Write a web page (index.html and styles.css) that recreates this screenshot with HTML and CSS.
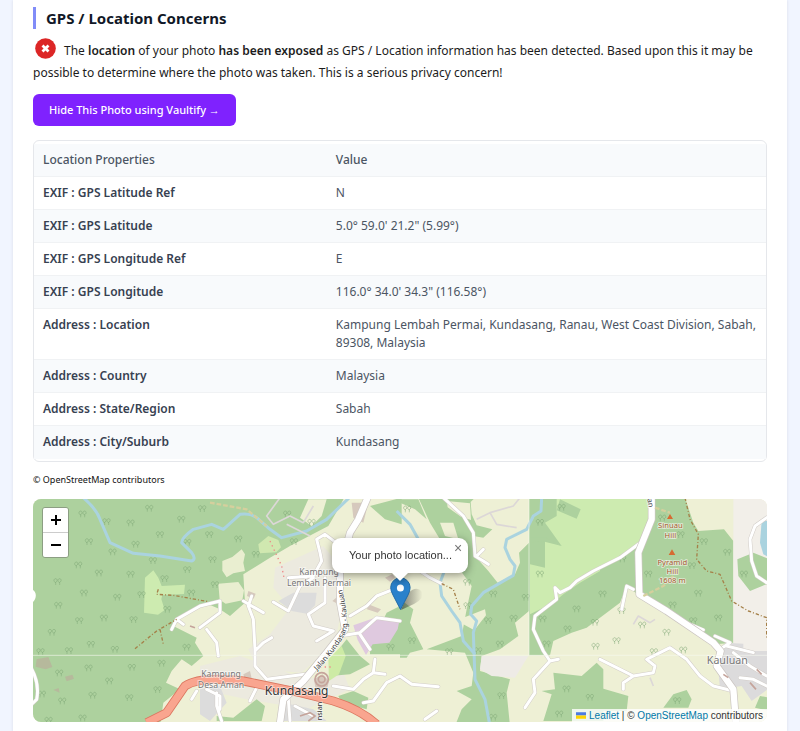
FILE: index.html
```html
<!DOCTYPE html>
<html lang="en">
<head>
<meta charset="utf-8">
<meta name="viewport" content="width=device-width, initial-scale=1">
<title>GPS / Location Concerns</title>
<link rel="stylesheet" href="styles.css">
</head>
<body>
<main class="card">
  <h2 class="title">GPS / Location Concerns</h2>
  <p class="notice"><svg class="alert" viewBox="0 0 21 21" aria-hidden="true"><circle cx="10.500" cy="10.500" r="10.300" fill="#dc2626"/><path d="M7.500 7.500l6 6m0-6l-6 6" stroke="#fff" stroke-width="2.800"/></svg>The <strong>location</strong> of your photo <strong>has been exposed</strong> as GPS / Location information has been detected. Based upon this it may be possible to determine where the photo was taken. This is a serious privacy concern!</p>
  <button class="cta" type="button">Hide This Photo using Vaultify →</button>

  <div class="table-box">
    <table>
      <thead><tr><th scope="col">Location Properties</th><th scope="col">Value</th></tr></thead>
      <tbody>
        <tr><th scope="row">EXIF : GPS Latitude Ref</th><td>N</td></tr>
        <tr><th scope="row">EXIF : GPS Latitude</th><td>5.0° 59.0' 21.2" (5.99°)</td></tr>
        <tr><th scope="row">EXIF : GPS Longitude Ref</th><td>E</td></tr>
        <tr><th scope="row">EXIF : GPS Longitude</th><td>116.0° 34.0' 34.3" (116.58°)</td></tr>
        <tr><th scope="row">Address : Location</th><td>Kampung Lembah Permai, Kundasang, Ranau, West Coast Division, Sabah, 89308, Malaysia</td></tr>
        <tr><th scope="row">Address : Country</th><td>Malaysia</td></tr>
        <tr><th scope="row">Address : State/Region</th><td>Sabah</td></tr>
        <tr><th scope="row">Address : City/Suburb</th><td>Kundasang</td></tr>
      </tbody>
    </table>
  </div>

  <p class="credit">© OpenStreetMap contributors</p>

  <section class="map" aria-label="Photo location map">
    <svg class="tiles" viewBox="99 39 2202 669" preserveAspectRatio="xMidYMid slice">
      <defs>
        <marker id="tree" markerUnits="userSpaceOnUse" markerWidth="30" markerHeight="30" refX="15" refY="15" viewBox="0 0 30 30">
          <path d="M9 24v-9m0 3l-3-4m3 2l3-3M21 24v-9m0 3l-3-4m3 2l3-3M5 14c-3-4 0-9 4-9s6 5 3 9M17 14c-3-4 0-9 4-9s6 5 3 9" fill="none" stroke="#7fa878" stroke-width="2" opacity=".75"/>
        </marker>
      </defs>
      <rect x="0" width="2400" height="740" fill="#eef0d5"/>

      <!-- west: forest and clearings -->
      <g transform="translate(60)">
        <path fill="#add19e" d="M0 0H990L960 60 925 120 810 180 750 215 670 265 675 350 630 390 600 370 555 350 470 395 460 420 530 455 525 470 550 510 515 540 485 520 455 555 438 590 480 610 430 650 420 720H0z"/>
        <path fill="#cdebb0" d="M375 275l25-22 15 22 10 25 70-4-3 28-65 3-3 12 10 33-20 14-42-6z"/>
        <path fill="#e9eed0" d="M607 225l30-12 28-23 10 15-5 25 5 25-35 7-20 12-13-20zM595 293l60-5 17 25-5 30-50 10-18-12z"/>
        <path fill="#bda99b" opacity=".6" d="M50 520l35-7 12 30-20 7-30-8zM135 572l22-6 5 12-22 8zM100 612l16-6 3 14z"/>
        <path fill="#fff" d="M35 310c18 8 15 30 0 42z"/>
      </g>

      <!-- centre: village and farmland -->
      <g transform="translate(600)">
        <path fill="#eceadf" d="M225 245l145-65 45 55 10 135-20 100-100 90-130-10-30-60 65-45 60-80-50-60zM0 540l120-30 200 70 110-20 20 50-130 60-180-30-140-30z"/>
        <path fill="#dcdcdc" d="M235 345l45-25 70 0-5 38-25 25-45-8zM0 610l60-10 20 50-50 55-30-20zM250 650l90 20 40 35H240z"/>
        <path fill="#d0e8b0" d="M175 175l30-25 30 12 8 22-14 15-50 3z"/>
        <path fill="#eef0d5" d="M325 40h55l-15 50-30 30-35-25z"/>
        <path fill="#add19e" d="M400 510l40-50 40 50 30 25-60 30-60 5zM50 690l50 5 70-55 25 20-10 45H50zM415 630l45-15 45 20-5 35-75-20zM510 480l50-100 40-20v145h-90zM510 60l95-25v80l-50-15z"/>
        <path fill="#dfc9df" d="M460 418l65-23 73 10-5 25-25 40-50 5-20 32-25-45z"/>
        <path fill="#cdeba5" d="M385 520l40-40 12 30-20 55-30 20z"/>
        <path fill="#d6c9bd" d="M455 50h50l-15 60-30-15zM342 580l25-15 20 20-5 20-35 5zM397 345l18-15v25zM505 355l38 15-10 10-32-10zM145 315l22 8-6 15-20-8zM555 275l22-10 8 10-15 12zM130 565l20-10 5 22-20 5z"/>
      </g>

      <!-- east-centre: valley -->
      <g transform="translate(1200)">
        <path fill="#add19e" d="M55 35H225L212 48 215 85 230 118 277 130 250 155 220 150 220 205 265 255 293 290 345 265 360 230 357 200 387 170V375L345 410 355 450 300 490 245 510 240 555 330 580 320 620 330 720H165L185 670 215 640 170 615 215 600 220 560 195 500 80 490 185 450 200 370 215 300 150 210 90 110z"/>
        <path fill="#add19e" d="M0 340l40 30-10 40 40 80-40 10-10 15H0zM0 40h55l25 60-35-30L0 50z"/>
        <path fill="#eef0d5" d="M140 45l70 7 3 50-30-10-40-28zM120 110l40 0 15 50-40-10zM190 395l65-25 3 18-35 45-33-18z"/>
        <path fill="#eeebe6" d="M245 510h140l-40 65-70-5-35-20z"/>
        <path fill="#add19e" d="M387 30H600V395L560 425 515 440 460 465 450 508H387z"/>
        <path fill="#cdebb0" d="M470 35H860L840 150 800 180 750 210 650 235 600 255 540 290 490 325 460 350 390 385V235l45 10V160l50 20-50-70 35-20z"/>
        <path fill="#add19e" d="M480 40l62 30-12 28-60-25zM388 155l50 0 47 25-60-15-37 5zM460 560l85 10 45-40 20 20v155H430l25-80-30-10 40-5z"/>
      </g>

      <!-- east: hills -->
      <g transform="translate(1800)">
        <path fill="#add19e" d="M160 35H255L280 110 295 135 372 130 400 165V470L345 475 120 330 80 300 60 350 0 395V250L60 220 130 165z"/>
        <path fill="#f2efe9" d="M400 30h120v470H400z"/>
        <path fill="#add19e" d="M412 220l48-20 50 20v70l-60 25-35-45zM0 605l85 25-5 45H0zM190 665l30-40 40-13 15 28-10 25zM465 665l15-35 30 5v40z"/>
        <path fill="#dcdbdc" d="M350 490l30-20 50 3v22l80 0v110l-55 40-30-45-65 10z"/>
        <path fill="#aad3df" d="M485 105h25v110l-20-10-10-35z"/>
      </g>

      <polyline fill="none" marker-start="url(#tree)" marker-mid="url(#tree)" marker-end="url(#tree)" points="248,85 320,108 392,112 448,68 544,101 607,69 480,147 267,168 407,176 338,199 562,170 628,147 638,222 459,225 562,252 235,238 297,262 392,266 173,288 494,279 645,297 252,322 352,335 425,327 175,359 574,322 238,405 312,397 401,402 502,371 156,440 273,476 122,498 207,495 345,491 560,485 266,547 396,545 485,533 178,562 328,586 473,612 126,625 278,629 388,636 187,646 248,697 146,704"/>
      <polyline fill="none" marker-start="url(#tree)" marker-mid="url(#tree)" marker-end="url(#tree)" points="715,160 768,206 862,85 882,168 935,110 1172,485 1222,70 1236,465 1348,498 1402,290 1480,325 1465,405 1403,360 1541,398 1500,475 1435,495 1578,335 1620,110 1620,265 1628,400 1640,475 1685,65 1730,370 1703,430 1785,410 1787,482 1505,630 1700,610 1770,635 1678,685 1480,695"/>
      <polyline fill="none" marker-start="url(#tree)" marker-mid="url(#tree)" marker-end="url(#tree)" points="1987,97 2042,147 2112,168 2182,200 2076,240 2232,265 1945,265 1867,220 2095,323 2018,358 2155,397 1865,375 1808,325 2080,405 1927,418 2000,440 1850,465 1962,498 2050,493 2032,645"/>

      <!-- rivers -->
      <g class="river">
        <path d="M250 35Q290 70 300 100L330 170 400 202 480 210 575 225Q590 220 575 200L545 170Q545 155 580 130L635 115 670 130 720 85Q750 80 770 95L810 130 845 155 920 135 980 100 1048 35"/>
        <path d="M1625 35L1623 75 1600 90 1580 130 1520 160 1515 185 1530 220 1545 240 1540 268 1450 320 1415 360 1412 385 1430 405 1420 440 1425 580 1455 640 1468 710"/>
        <path d="M1190 75L1230 115 1255 160 1335 250 1320 290 1325 330 1355 375 1380 410 1390 465 1425 505"/>
      </g>

      <!-- roads: casing first, then surface -->
      <defs>
        <path id="lanes" d="M1035 190L975 145 950 160 960 200 965 225 940 270 865 275M820 348L865 375 900 300 940 275M975 275V350L925 385 940 420 1000 435 950 465M755 330L745 360 760 400 765 490 765 540 800 580 915 565M765 495L790 470 815 455M730 345L755 360 790 380M1020 450L1080 440 1130 395 1200 405M1050 390L1100 360 1130 330 1180 310M1080 445L1110 490M1000 600L1060 610 1090 580 1120 560 1155 565M1120 560L1125 520M1090 650L1120 645 1160 590 1200 570M530 400L600 360 660 345 660 380 600 425M515 430L530 400 550 415M620 430L650 470 655 510M620 610L660 630 660 670M590 615L575 640M650 620L650 660 665 705M750 645L770 605M865 640L870 705M885 660L940 690M1330 35L1390 90 1420 140 1425 210 1450 225 1465 235M1430 210L1450 190M1245 245L1290 275 1325 293M1200 570L1235 595 1315 602M1275 700L1310 675M1865 370L1880 300 1900 310M1800 520L1850 545 1900 570 1960 560 1965 540 1940 520 2010 485 2060 520 2100 570 2140 600 2200 615M1870 610V590L1900 570M2300 290L2270 270 2255 225 2250 160 2265 120 2300 95M2070 415L2110 432M2145 450L2190 470 2160 490M2200 500L2250 540 2300 570M2220 575L2260 580 2310 605M2180 480L2260 500M90 540Q120 590 110 640L95 655"/>
        <path id="hill" d="M1935 160L1860 215 1780 255 1730 285 1710 305 1680 320 1665 305 1670 340 1605 390 1600 430 1630 495 1650 525 1675 520M1650 525L1600 580 1605 620 1575 665"/>
        <path id="highway" d="M1105 30L1075 100 1050 140 1020 250 1020 350 1035 430 980 500 910 585 850 640 840 710M1955 30L1955 100 1915 200 1918 325 2000 375 2140 470 2162 495 2150 540 2200 610 2208 710"/>
        <path id="trunk" d="M440 710L500 680 555 600Q600 570 730 585L900 620 1000 645Q1080 670 1130 715"/>
        <path id="street" d="M948 558Q1035 465 1042 420Q1042 370 1025 305"/>
      </defs>
      <g class="road-edge"><use href="#lanes"/><use href="#hill"/></g>
      <g class="road"><use href="#lanes"/><use href="#hill"/></g>
      <path class="lane" d="M840 35L800 90 820 115 870 90 910 110 940 60M860 115L930 150M1430 100L1470 80 1540 60 1560 35M1470 80L1490 115 1550 125M1900 415L1915 390 1950 410 1965 400M1950 575L1960 600"/>
      <use class="main-edge" href="#highway"/><use class="main" href="#highway"/>
      <use class="trunk-edge" href="#trunk"/><use class="trunk" href="#trunk"/>

      <path class="trail" d="M475 310L470 325 520 328 625 347M405 488L470 435 530 400M480 430L490 475M1325 293L1360 310 1380 370M2055 35L2070 100 2095 145 2090 220 2120 255 2160 265 2195 345 2245 375 2300 395V460"/>
      <path class="steps" d="M810 165L845 240 852 275M960 543H1000"/>
      <path class="track" d="M630 50L740 70 800 120M1930 330L1990 300 2020 270M1965 65L2010 80"/>
      <g fill="none" stroke="#c5a49b" stroke-width="5"><circle cx="965" cy="580" r="20"/><circle cx="965" cy="580" r="10"/><path d="M570 420l15 5M900 690l30-10 15 10-20 15M2250 590l18 20M2270 550l15 15M2170 565l15 10"/></g>
      <path d="M99 508H2301M1587 39V508" stroke="#f8faf1" stroke-width="3" opacity=".6"/>
      <path fill="#d66b32" d="M2010 84l9 15h-18zM2016 190l10 17h-20z"/>

      <g class="labels" text-anchor="middle">
        <text x="957" y="266">Kampung</text><text x="957" y="299">Lembah Permai</text>
        <text x="663" y="572">Kampung</text><text x="663" y="605">Desa Aman</text>
        <text class="town" x="890" y="627">Kundasang</text>
        <text class="village" x="2182" y="534">Kauluan</text>
        <g class="peak"><text x="2011" y="127">Sinuau</text><text x="2011" y="155">Hill</text><text x="2017" y="236">Pyramid</text><text x="2017" y="264">Hill</text><text x="2017" y="292">1608 m</text></g>
        <text class="street"><textPath href="#street" startOffset="50%">Jalan Kundasang - Kauluan</textPath></text>
        <text class="street" transform="translate(967 675) rotate(-90)">nsian</text>
        <text class="street" transform="translate(1944 52) rotate(80)">an</text>
      </g>
    </svg>

    <div class="zoom"><button type="button" aria-label="Zoom in"><svg viewBox="0 0 12 12"><path d="M6 1v10M1 6h10"/></svg></button><button type="button" aria-label="Zoom out"><svg viewBox="0 0 12 12"><path d="M1 6h10"/></svg></button></div>

    <svg class="pin" viewBox="0 0 40 34" aria-hidden="true">
      <defs><linearGradient id="shade"><stop stop-color="#222" stop-opacity=".55"/><stop offset="1" stop-color="#222" stop-opacity="0"/></linearGradient></defs>
      <path d="M11 33L18 16Q27 8 32 15 35 21 24 27z" fill="url(#shade)"/>
      <path d="M10.500 32.500L3 18Q.7 14 .7 10.500a9.700 9.700 0 0 1 19.400 0Q20.100 14 18 18z" fill="#2a81cb" stroke="#216ba8"/>
      <circle cx="10.400" cy="11" r="3.500" fill="#fff"/>
    </svg>
    <div class="popup" role="dialog" aria-label="Photo location">Your photo location...<button type="button" aria-label="Close popup">×</button></div>

    <div class="attribution"><svg class="flag" viewBox="0 0 12 8" aria-hidden="true"><path fill="#4c7be1" d="M0 0h12v4H0z"/><path fill="#ffd500" d="M0 4h12v4H0z"/></svg> <a href="#leaflet">Leaflet</a> | © <a href="#osm">OpenStreetMap</a> contributors</div>
  </section>
</main>
</body>
</html>
```

FILE: styles.css
```css
* { box-sizing: border-box; }
body {
  margin: 0;
  padding: 0 13px;
  background: #f1f5ff;
  color: #111827;
  font: 12px/22px "Noto Sans", "Open Sans", sans-serif;
}
.card {
  min-height: 100vh;
  padding: 7px 20px 10px;
  background: #fff;
  box-shadow: 0 0 3px #d9dce7;
}
.title {
  margin: 0 0 9px;
  padding-left: 10px;
  border-left: 3px solid #818cf8;
  font-size: 15px;
  line-height: 22px;
  font-weight: 700;
}
.notice { margin: 0; color: #1c1c1c; }
.notice strong { font-weight: 600; }
.alert { width: 21px; height: 21px; margin: 0 8px 0 2px; vertical-align: -4px; }
.cta {
  display: block;
  height: 32px;
  margin: 10px 0 14px;
  padding: 0 16px;
  border: 0;
  border-radius: 6px;
  background: #7f22fe;
  color: #fff;
  font: 500 11px/16px "Noto Sans", "Open Sans", sans-serif;
}
.table-box {
  padding: 3px 0 2px;
  border: 1px solid #e5e7eb;
  border-radius: 6px;
}
table { width: 100%; border-collapse: collapse; table-layout: fixed; line-height: 18px; }
th, td { padding: 7px 9px; text-align: left; vertical-align: top; border-bottom: 1px solid #f0f2f4; }
th:first-child { width: 40%; }
thead th { color: #4b5563; font-weight: 500; }
tbody th { color: #374151; font-weight: 600; }
td { color: #4b5563; }
thead tr, tbody tr:nth-child(even) { background: #f8fafc; }
tbody tr:last-child > * { border-bottom-color: transparent; }
.credit { margin: 10px 0 11px; font-size: 9px; line-height: 16px; color: #111; }
.map {
  position: relative;
  height: 223px;
  overflow: hidden;
  border-radius: 8px;
  font-family: "Liberation Sans", Arial, sans-serif;
}
.tiles { display: block; width: 100%; height: 100%; }
.tiles path { stroke-linejoin: round; }
.river { fill: none; stroke: #aad3df; stroke-width: 9; }
.road-edge { fill: none; stroke: #d2cdc8; stroke-width: 12; stroke-linecap: round; }
.road { fill: none; stroke: #fff; stroke-width: 9; stroke-linecap: round; }
.lane { fill: none; stroke: #dcd7d7; stroke-width: 5; }
.main-edge { fill: none; stroke: #cbc5c1; stroke-width: 23; }
.main { fill: none; stroke: #fff; stroke-width: 19; }
.trunk-edge { fill: none; stroke: #db765f; stroke-width: 27; }
.trunk { fill: none; stroke: #f9a58f; stroke-width: 22; }
.trail { fill: none; stroke: #a58049; stroke-width: 4; stroke-dasharray: 10 6 3 6; }
.steps { fill: none; stroke: #e88; stroke-width: 4; stroke-dasharray: 4 10; }
.track { fill: none; stroke: #d5cf9d; stroke-width: 7; stroke-dasharray: 14 6; }
.labels { font: 26px "Noto Sans", sans-serif; fill: #777; stroke: #fff; stroke-opacity: .6; stroke-width: 5; paint-order: stroke; }
.labels .town { font-size: 36px; fill: #333; }
.labels .village { font-size: 32px; }
.labels .peak { font-size: 23px; fill: #a8592e; }
.labels .street { font-size: 22px; fill: #333; }
.zoom {
  position: absolute;
  left: 9px;
  top: 8px;
  width: 27px;
  border: 1px solid #8c9e83;
  border-radius: 3px;
  overflow: hidden;
}
.zoom button { display: grid; place-items: center; width: 100%; height: 24px; padding: 0; border: 0; background: #fff; }
.zoom button + button { height: 25px; border-top: 1px solid #ccc; }
.zoom svg { width: 12px; height: 12px; fill: none; stroke: #000; stroke-width: 2; }
.pin { position: absolute; left: calc(50% - 10px); top: 78px; width: 40px; height: 34px; }
.popup {
  position: absolute;
  left: 50%;
  top: 39px;
  width: 136px;
  height: 35px;
  margin-left: -68px;
  padding-left: 17px;
  border-radius: 9px;
  background: #fff;
  color: #333;
  font-size: 11px;
  line-height: 34px;
  white-space: nowrap;
  filter: drop-shadow(0 2px 4px #0006);
}
.popup::after {
  content: "";
  position: absolute;
  left: 60px;
  top: 35px;
  border: solid transparent;
  border-width: 8px 8px 0;
  border-top-color: #fff;
}
.popup button {
  position: absolute;
  right: 0;
  top: 0;
  width: 20px;
  height: 20px;
  padding: 0;
  border: 0;
  background: none;
  color: #757575;
  font: 14px/20px "Liberation Sans", Arial, sans-serif;
}
.attribution {
  position: absolute;
  right: 0;
  bottom: 0;
  padding: 0 4px;
  background: #fffc;
  color: #333;
  font-size: 10px;
  line-height: 13px;
  white-space: nowrap;
}
.attribution a { color: #0078a8; text-decoration: none; }
.flag { width: 10px; height: 7px; }
```
